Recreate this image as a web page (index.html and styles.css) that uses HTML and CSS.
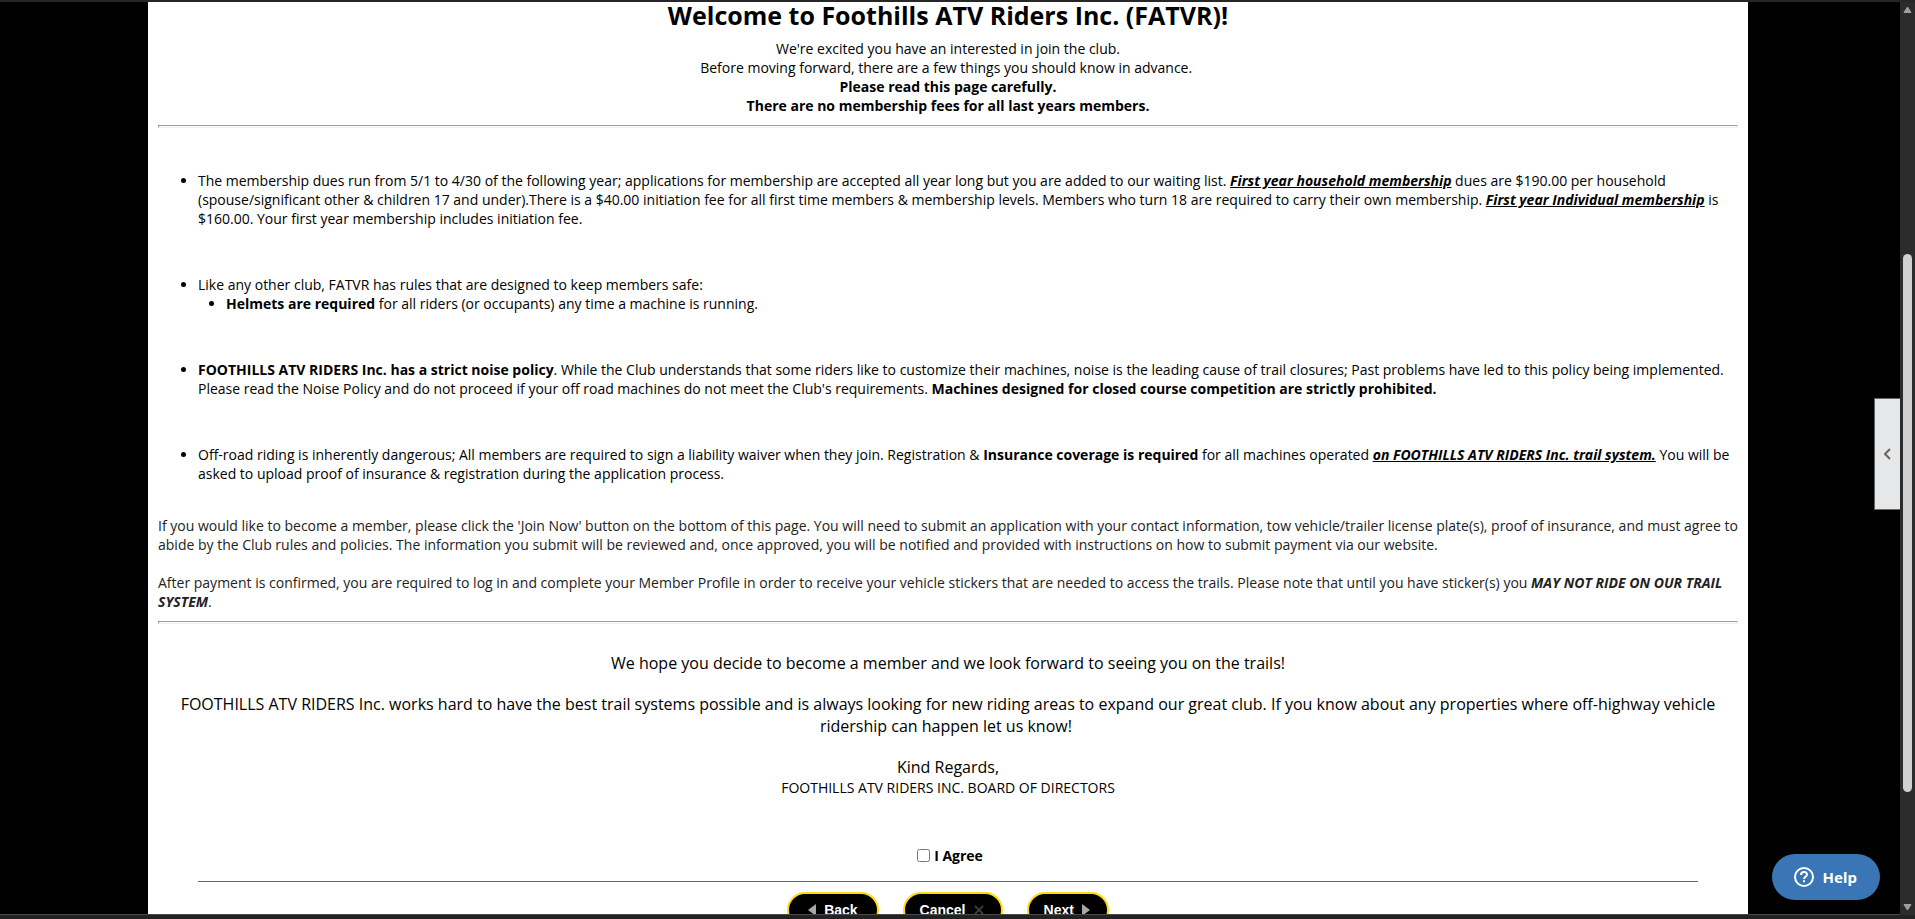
FILE: index.html
```html
<!DOCTYPE html>
<html lang="en">
<head>
    <meta charset="UTF-8">
    <meta name="viewport" content="width=device-width, initial-scale=1.0">
    <title>Foothills ATV Riders Inc.</title>

    <link rel="stylesheet" href="styles.css">
</head>
<body>
    <div class="window">
        <div class="page">
            <main class="content">
                <h1>Welcome to Foothills ATV Riders Inc. (FATVR)!</h1>
                <div class="intro">
                    We're excited you have an interested in join the club.<br>
                    Before moving forward, there are a few things you should know in advance.&nbsp;<br>
                    <strong>Please read this page carefully.</strong><br>
                    <strong>There are no membership fees for all last years members.</strong>
                </div>
                <hr>
                <ul class="rules">
                    <li>The membership dues run from 5/1 to 4/30 of the following year; applications for membership are accepted all year long but you are added to our waiting list. <strong class="key">First year household membership</strong> dues are $190.00 per household (spouse/significant other &amp; children 17 and under).There is a $40.00 initiation fee for all first time members &amp; membership levels. Members who turn 18 are required to carry their own membership. <strong class="key">First year Individual membership</strong> is $160.00. Your first year membership includes initiation fee.</li>
                    <li>Like any other club, FATVR has rules that are designed to keep members safe:
                        <ul>
                            <li><strong>Helmets are required</strong> for all riders (or occupants) any time a machine is running.</li>
                        </ul>
                    </li>
                    <li><strong>FOOTHILLS ATV RIDERS Inc. has a strict noise policy</strong>. While the Club understands that some riders like to customize their machines, noise is the leading cause of trail closures; Past problems have led to this policy being implemented. Please read the Noise Policy and do not proceed if your off road machines do not meet the Club's requirements. <strong>Machines designed for closed course competition are strictly prohibited.</strong></li>
                    <li>Off-road riding is inherently dangerous; All members are required to sign a liability waiver when they join. Registration &amp; <strong>Insurance coverage is required</strong> for all machines operated <strong class="key">on FOOTHILLS ATV RIDERS Inc. trail system.</strong> You will be asked to upload proof of insurance &amp; registration during the application process.</li>
                </ul>
                <div class="details">
                    <p>If you would like to become a member, please click the 'Join Now' button on the bottom of this page. You will need to submit an application with your contact information, tow vehicle/trailer license plate(s), proof of insurance, and must agree to abide by the Club rules and policies. The information you submit will be reviewed and, once approved, you will be notified and provided with instructions on how to submit payment via our website.</p>
                    <p>After payment is confirmed, you are required to log in and complete your Member Profile in order to receive your vehicle stickers that are needed to access the trails. Please note that until you have sticker(s) you <strong><em>MAY NOT RIDE ON OUR TRAIL SYSTEM</em></strong>.</p>
                </div>
                <hr>
                <div class="closing">
                    <p>We hope you decide to become a member and we look forward to seeing you on the trails!</p>
                    <p>FOOTHILLS ATV RIDERS Inc. works hard to have the best trail systems possible and is always looking for new riding areas to expand our great club. If you know about any properties where off-highway vehicle ridership can happen let us know!&nbsp;</p>
                    <p>Kind Regards,<span class="board">FOOTHILLS ATV RIDERS INC. BOARD OF DIRECTORS</span></p>
                </div>
                <form class="agree-form">
                    <div class="agree">
                        <input type="checkbox" id="agree">
                        <label for="agree">I Agree</label>
                    </div>
                    <div class="buttons">
                        <button type="button" class="btn btn-back">
                            <svg width="8" height="12" viewBox="0 0 8 12"><path d="M8 0v12L0 6z" fill="#a8a8a8"/></svg>
                            Back
                        </button>
                        <button type="button" class="btn">
                            Cancel
                            <svg width="10" height="10" viewBox="0 0 10 10"><path d="M1 1l8 8M9 1L1 9" stroke="#3c3c3c" stroke-width="2"/></svg>
                        </button>
                        <button type="button" class="btn">
                            Next
                            <svg width="8" height="12" viewBox="0 0 8 12"><path d="M0 0v12l8-6z" fill="#a8a8a8"/></svg>
                        </button>
                    </div>
                </form>
            </main>

            <button type="button" class="side-tab" aria-label="Open panel">
                <svg width="8" height="12" viewBox="0 0 8 12"><path d="M6 1L1 6l5 5" fill="none" stroke="#666" stroke-width="2"/></svg>
            </button>
            <button type="button" class="help">
                <svg width="20" height="20" viewBox="0 0 20 20" fill="none" stroke="#fff" stroke-width="2">
                    <circle cx="10" cy="10" r="9"/>
                    <path d="M7 8c0-4 6-4 6-.6 0 2.200-3 2.400-3 4.600M10 13.200v2"/>
                </svg>
                Help
            </button>
        </div>

        <div class="scrollbar" aria-hidden="true">
            <svg width="9" height="8" viewBox="0 0 9 8"><path d="M4.500 1L8 6.500H1z" fill="#9f9f9f" stroke="#9f9f9f" stroke-linejoin="round"/></svg>
            <div class="track"><div class="thumb"></div></div>
            <svg width="9" height="8" viewBox="0 0 9 8"><path d="M4.500 7L8 1.500H1z" fill="#9f9f9f" stroke="#9f9f9f" stroke-linejoin="round"/></svg>
        </div>
    </div>
</body>
</html>
```
FILE: styles.css
```css
* {
    box-sizing: border-box;
}

body {
    margin: 0;
    background: #000;
    color: #000;
    font-family: "Open Sans", "Noto Sans", sans-serif;
    font-size: 14px;
    line-height: 19px;
}

.window {
    display: flex;
    height: 100vh;
    border-top: 2px solid #272626;
    border-bottom: 4px solid #232222;
}

.page {
    position: relative;
    flex: 1;
    overflow: hidden;
    padding-right: 4px;
    border-bottom: 1px solid #4a4a4a;
}

.content {
    max-width: 1600px;
    min-height: 100%;
    margin: 0 auto;
    padding: 0 10px 40px;
    background: #fff;
}

h1 {
    margin: 0 0 11px;
    font-size: 25px;
    line-height: 26px;
    text-align: center;
}

hr {
    height: 3px;
    margin: 10px 0;
    border: 1px solid;
    border-color: #999 #eee #eee #999;
}

.intro {
    text-align: center;
}

.rules {
    margin: 43px 0 0;
    padding-left: 40px;
}

.rules > li {
    margin-bottom: 47px;
}

.rules > li:last-child {
    margin-bottom: 33px;
}

.rules ul {
    padding-left: 28px;
    list-style: disc;
}

.key {
    font-style: italic;
    text-decoration: underline;
}

.details {
    color: #222;
}

.details p {
    margin: 0 0 19px;
}

.details p:last-child {
    margin-bottom: 0;
}

.closing {
    margin-top: 28px;
    font-size: 16px;
    line-height: 22px;
    text-align: center;
}

.closing p {
    margin: 0 0 19px;
}

.board {
    display: block;
    font-size: 14px;
    line-height: 20px;
}

.agree-form {
    padding: 29px 40px 0;
}

.agree {
    display: flex;
    justify-content: center;
    gap: 4px;
    padding-bottom: 16px;
    border-bottom: 1px solid #666;
    font-weight: bold;
}

.agree input {
    width: 13px;
    height: 13px;
    margin: 3px 0 3px 4px;
}

.buttons {
    display: flex;
    justify-content: center;
    gap: 24px;
    padding-top: 10px;
}

.btn {
    display: flex;
    align-items: center;
    gap: 8px;
    height: 36px;
    padding: 0 17px 0 15px;
    border: 2px solid #ffd911;
    border-radius: 18px;
    background: #000;
    color: #fff;
    font-family: "Liberation Sans", Arial, sans-serif;
    font-size: 14px;
    font-weight: bold;
}

.btn-back {
    padding: 0 19px;
}

.side-tab {
    position: absolute;
    top: 396px;
    right: 0;
    display: flex;
    align-items: center;
    justify-content: center;
    width: 26px;
    height: 112px;
    padding: 0;
    border: 1px solid #666;
    border-right: 0;
    background: #e6e7e9;
}

.help {
    position: absolute;
    right: 20px;
    bottom: 14px;
    display: flex;
    align-items: center;
    gap: 9px;
    height: 46px;
    padding: 0 23px 0 22px;
    border: 0;
    border-radius: 23px;
    background: #3a75b5;
    color: #fff;
    font-family: "Noto Sans", sans-serif;
    font-size: 15px;
    font-weight: bold;
}

.scrollbar {
    display: flex;
    flex-direction: column;
    align-items: center;
    width: 15px;
    padding: 4px 0;
    background: #2c2c2c;
}

.track {
    flex: 1;
    width: 9px;
}

.thumb {
    position: relative;
    top: 27%;
    height: 60.5%;
    border-radius: 5px;
    background: #d0d0d0;
}
```
